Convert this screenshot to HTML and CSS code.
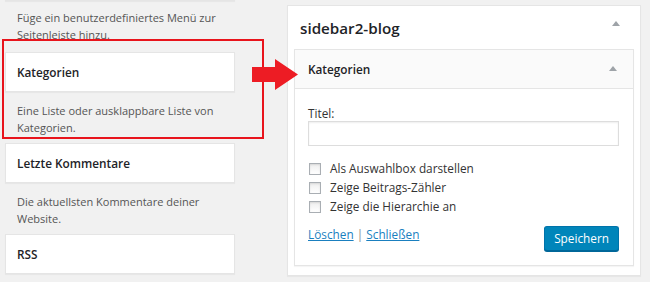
FILE: index.html
```html
<!DOCTYPE html>
<html lang="de">
<head>
<meta charset="utf-8">
<title>Widgets</title>
<link rel="stylesheet" href="styles.css">
</head>
<body>
<div class="page">
  <div class="available">
    <div class="card card-cut"></div>
    <p class="desc desc-first">Füge ein benutzerdefiniertes Menü zur Seitenleiste hinzu.</p>
    <div class="card"><h3 class="card-title">Kategorien</h3></div>
    <p class="desc">Eine Liste oder ausklappbare Liste von Kategorien.</p>
    <div class="card"><h3 class="card-title">Letzte Kommentare</h3></div>
    <p class="desc">Die aktuellsten Kommentare deiner Website.</p>
    <div class="card"><h3 class="card-title">RSS</h3></div>
  </div>

  <div class="sidebar">
    <div class="sidebar-head">
      <h2 class="sidebar-name">sidebar2-blog</h2>
      <svg class="toggle toggle-sidebar" width="8" height="5" viewBox="0 0 8 5"><polygon points="4,0 8,5 0,5"/></svg>
    </div>
    <div class="widget">
      <div class="widget-top">
        <h3 class="widget-title">Kategorien</h3>
        <svg class="toggle toggle-widget" width="8" height="5" viewBox="0 0 8 5"><polygon points="4,0 8,5 0,5"/></svg>
      </div>
      <div class="widget-inside">
        <label class="field-label" for="titel">Titel:</label>
        <input class="text-input" id="titel" type="text">
        <div class="options">
          <label class="option"><input class="check" type="checkbox"><span>Als Auswahlbox darstellen</span></label>
          <label class="option"><input class="check" type="checkbox"><span>Zeige Beitrags-Zähler</span></label>
          <label class="option"><input class="check" type="checkbox"><span>Zeige die Hierarchie an</span></label>
        </div>
        <div class="actions">
          <div class="links"><a href="#">Löschen</a> <span class="sep">|</span> <a href="#">Schließen</a></div>
          <button class="button-primary" type="button">Speichern</button>
        </div>
      </div>
    </div>
  </div>
</div>

<div class="highlight"></div>
<svg class="arrow" width="46" height="31" viewBox="0 0 46 31"><polygon points="0,8 23,8 23,0 46,15.5 23,31 23,23 0,23"/></svg>
</body>
</html>
```

FILE: styles.css
```css
html, body {
  margin: 0;
  padding: 0;
}

body {
  background: #f1f1f1;
  font-family: "Open Sans", "Liberation Sans", sans-serif;
  color: #23282d;
  width: 650px;
  height: 282px;
  overflow: hidden;
  position: relative;
}

.page {
  display: flex;
  align-items: flex-start;
  gap: 52px;
  padding-left: 5px;
}

.available {
  width: 230px;
  display: flex;
  flex-direction: column;
}

.card {
  box-sizing: border-box;
  height: 40px;
  background: #fff;
  border: 1px solid #e5e5e5;
  box-shadow: 0 1px 1px rgba(0, 0, 0, 0.04);
  display: flex;
  align-items: center;
  padding: 0 11px;
}

.card-cut {
  margin-top: -39px;
}

.card-title {
  margin: 0;
  font-size: 11.8px;
  font-weight: 600;
  line-height: 17px;
  color: #1e2327;
}

.desc {
  margin: 0;
  padding: 10px 12px 7px;
  font-size: 11px;
  line-height: 17px;
  color: #555;
}

.desc-first {
  padding-top: 8px;
  padding-bottom: 9px;
}

.sidebar {
  box-sizing: border-box;
  width: 354px;
  margin-top: 5px;
  background: #fff;
  border: 1px solid #e5e5e5;
  box-shadow: 0 1px 1px rgba(0, 0, 0, 0.04);
  padding: 0 6px 9px;
}

.sidebar-head {
  height: 43px;
  display: flex;
  align-items: center;
  justify-content: space-between;
  padding-left: 6px;
}

.sidebar-name {
  margin: 0;
  font-size: 15.2px;
  font-weight: 600;
  line-height: 20px;
  color: #1e2327;
}

.toggle {
  display: block;
  fill: #9ea3a8;
}

.toggle-sidebar {
  margin-right: 14px;
  margin-top: -8px;
}

.toggle-widget {
  margin-right: 16px;
  margin-top: -2px;
}

.widget {
  background: #fff;
  border: 1px solid #e5e5e5;
  box-shadow: 0 1px 1px rgba(0, 0, 0, 0.04);
}

.widget-top {
  height: 38px;
  background: #fafafa;
  border-bottom: 1px solid #e5e5e5;
  display: flex;
  align-items: center;
  justify-content: space-between;
  padding-left: 13px;
}

.widget-title {
  margin: 0;
  font-size: 11.8px;
  font-weight: 600;
  line-height: 17px;
  color: #1e2327;
}

.widget-inside {
  padding: 16px 14px 14px 13px;
  font-size: 11.8px;
  color: #333;
}

.field-label {
  display: block;
  line-height: 16px;
}

.text-input {
  display: block;
  box-sizing: border-box;
  width: 100%;
  height: 25px;
  margin: 0;
  border: 1px solid #ddd;
  box-shadow: inset 0 1px 2px rgba(0, 0, 0, 0.07);
  background: #fff;
  outline: none;
}

.options {
  margin-top: 13px;
  display: flex;
  flex-direction: column;
}

.option {
  height: 19px;
  display: flex;
  align-items: center;
  line-height: 17px;
  color: #333;
}

.check {
  -webkit-appearance: none;
  appearance: none;
  box-sizing: border-box;
  width: 12px;
  height: 12px;
  margin: 0 9px 0 1px;
  border: 1px solid #a9aeb3;
  background: linear-gradient(#eee, #fff);
  box-shadow: inset 0 1px 2px rgba(0, 0, 0, 0.1);
  border-radius: 0;
}

.actions {
  margin-top: 10px;
  display: flex;
  justify-content: space-between;
  align-items: flex-start;
}

.links {
  line-height: 17px;
  color: #888;
}

.links a {
  color: #1a7fbf;
  text-decoration: underline;
}

.sep {
  color: #888;
}

.button-primary {
  box-sizing: border-box;
  height: 25px;
  padding: 0 9px;
  margin: 0;
  font-family: "Open Sans", "Liberation Sans", sans-serif;
  font-size: 11.8px;
  line-height: 23px;
  color: #fff;
  background: #0085ba;
  border: 1px solid #0073aa;
  border-bottom-color: #006799;
  border-radius: 3px;
  box-shadow: 0 1px 0 #006799;
}

.highlight {
  position: absolute;
  left: 2px;
  top: 39px;
  width: 262px;
  height: 100px;
  box-sizing: border-box;
  border: 2px solid #e8141c;
}

.arrow {
  position: absolute;
  left: 252px;
  top: 59px;
  fill: #ed1c24;
}
```
